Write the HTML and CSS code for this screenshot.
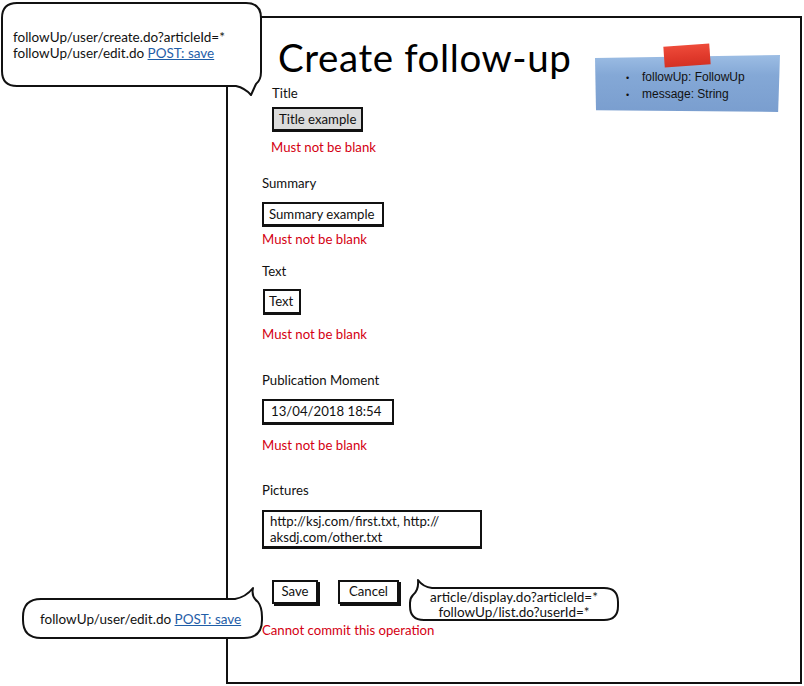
FILE: index.html
```html
<!DOCTYPE html>
<html>
<head>
<meta charset="utf-8">
<link rel="stylesheet" href="styles.css">
</head>
<body>
<div class="page">
  <div class="frame">
    <h1 class="heading">Create follow-up</h1>

    <div class="field field--indent field--title">
      <div class="label">Title</div>
      <div class="input input--gray input--w91">Title example</div>
      <div class="error error--title">Must not be blank</div>
    </div>

    <div class="field field--summary">
      <div class="label">Summary</div>
      <div class="input input--w122 input--summary">Summary example</div>
      <div class="error error--summary">Must not be blank</div>
    </div>

    <div class="field field--text">
      <div class="label">Text</div>
      <div class="input input--w37 input--text">Text</div>
      <div class="error error--text">Must not be blank</div>
    </div>

    <div class="field field--pub">
      <div class="label">Publication Moment</div>
      <div class="input input--w132 input--pub">13/04/2018 18:54</div>
      <div class="error error--pub">Must not be blank</div>
    </div>

    <div class="field field--pics">
      <div class="label">Pictures</div>
      <div class="input input--multi input--pics">http://ksj.com/first.txt, http://<br>aksdj.com/other.txt</div>
    </div>

    <div class="actions">
      <div class="btn btn--save">Save</div>
      <div class="btn btn--cancel">Cancel</div>
    </div>
    <div class="error error--commit">Cannot commit this operation</div>
  </div>

  <div class="note">
    <div class="note__paper"></div>
    <div class="note__tape"></div>
    <ul class="note__list">
      <li>followUp: FollowUp</li>
      <li>message: String</li>
    </ul>
  </div>

  <div class="bubble bubble--top">
    <svg class="bubble__shape" width="270" height="100" viewBox="0 0 270 100">
      <path d="M 17 3 H 246 Q 261 3 261 18 V 72 Q 261 80 256 84 L 251 95 Q 245 88 236 86 H 17 Q 2 86 2 71 V 18 Q 2 3 17 3 Z" fill="#fff" stroke="#111" stroke-width="2" stroke-linejoin="round"/>
    </svg>
    <div class="bubble__text bubble__text--top">followUp/user/create.do?articleId=*<br>followUp/user/edit.do <a class="link">POST: save</a></div>
  </div>

  <div class="bubble bubble--left">
    <svg class="bubble__shape" width="250" height="60" viewBox="0 0 250 60">
      <path d="M 21 16 H 215 Q 226 14 233 5 Q 231 14 238 19 Q 242 24 242 34 V 37 Q 242 55 224 55 H 21 Q 3 55 3 37 V 34 Q 3 16 21 16 Z" fill="#fff" stroke="#111" stroke-width="2" stroke-linejoin="round"/>
    </svg>
    <div class="bubble__text bubble__text--left">followUp/user/edit.do <a class="link">POST: save</a></div>
  </div>

  <div class="bubble bubble--right">
    <svg class="bubble__shape" width="220" height="50" viewBox="0 0 220 50">
      <path d="M 27 13 H 199 Q 213 13 213 27 V 31 Q 213 45 199 45 H 19 Q 5 45 5 31 V 28 Q 5 23 8 20 Q 14 15 13 5 Q 18 12 27 13 Z" fill="#fff" stroke="#111" stroke-width="2" stroke-linejoin="round"/>
    </svg>
    <div class="bubble__text bubble__text--right">article/display.do?articleId=*<br>followUp/list.do?userId=*</div>
  </div>
</div>
</body>
</html>
```
FILE: styles.css
```css
* { box-sizing: border-box; }
html, body { margin: 0; padding: 0; background: #fff; }
body {
  font-family: "Lato", "Noto Sans", sans-serif;
  font-size: 13.2px;
  color: #111;
}
.page {
  position: relative;
  width: 804px;
  height: 686px;
  overflow: hidden;
}
.frame {
  margin: 16px 0 0 226px;
  width: 576px;
  height: 668px;
  border: 2px solid #111;
  padding: 0 0 0 34px;
  display: flex;
  flex-direction: column;
  align-items: flex-start;
}
.heading {
  margin: 17px 0 0 16px;
  font-weight: 400;
  font-size: 38.5px;
  line-height: 44px;
  height: 47px;
  letter-spacing: 0.6px;
  color: #000;
}
.field {
  display: flex;
  flex-direction: column;
  align-items: flex-start;
}
.field--indent { margin-left: 10px; }
.field--title { margin-top: 3px; }
.field--summary { margin-top: 20px; }
.field--text { margin-top: 16px; }
.field--pub { margin-top: 30px; }
.field--pics { margin-top: 29px; }
.label {
  height: 16px;
  line-height: 16px;
}
.input {
  margin-top: 6px;
  height: 24px;
  line-height: 20px;
  border: 2px solid #111;
  box-shadow: 0 1px 0 #111;
  padding: 0 0 0 5px;
  white-space: nowrap;
  background: #fff;
}
.input--gray { background: #dcdcdc; }
.input--w91 { width: 91px; }
.input--w122 { width: 122px; }
.input--w37 { width: 38px; }
.input--w132 { width: 132px; }
.input--summary { margin-top: 11px; padding-left: 5px; }
.input--text { margin-top: 10px; height: 25px; margin-left: 1px; padding-left: 4px; }
.input--pub { margin-top: 11px; height: 25px; padding-left: 7px; }
.input--pics { margin-top: 12px; }
.input--multi {
  width: 220px;
  height: 38px;
  line-height: 16px;
  padding: 1px 0 0 6px;
}
.error {
  color: #d40012;
  height: 16px;
  line-height: 16px;
}
.error--title { margin-top: 8px; margin-left: -1px; }
.error--summary { margin-top: 5px; }
.error--text { margin-top: 12px; }
.error--pub { margin-top: 13px; }
.error--commit { margin-top: 18px; }
.actions {
  margin-top: 32px;
  margin-left: 10px;
  display: flex;
  gap: 20px;
}
.btn {
  height: 24px;
  line-height: 19px;
  border: 2px solid #111;
  box-shadow: 2px 2px 0 #111;
  text-align: center;
  background: #fff;
}
.btn--save { width: 46px; }
.btn--cancel { width: 61px; }

.bubble {
  position: absolute;
}
.bubble__shape {
  position: absolute;
  left: 0;
  top: 0;
  display: block;
}
.bubble__text {
  position: absolute;
  white-space: nowrap;
  line-height: 16px;
  font-size: 13.5px;
}
.link {
  color: #1f5ea8;
  text-decoration: underline;
}
.bubble--top { left: 0; top: 0; width: 270px; height: 100px; }
.bubble__text--top { left: 13px; top: 29px; }
.bubble--left { left: 20px; top: 583px; width: 250px; height: 60px; }
.bubble__text--left { left: 20px; top: 28px; }
.bubble--right { left: 405px; top: 575px; width: 220px; height: 50px; }
.bubble__text--right { left: 5px; width: 208px; top: 15px; text-align: center; line-height: 15px; }

.note {
  position: absolute;
  left: 595px;
  top: 42px;
  width: 190px;
  height: 72px;
}
.note__paper {
  position: absolute;
  left: 0;
  top: 13px;
  width: 185px;
  height: 57px;
  background: linear-gradient(180deg, #9cbde4 0%, #84a8d6 35%, #7a9ecf 100%);
  clip-path: polygon(0 3px, 100% 0, 99% 100%, 1px 97%);
}
.note__tape {
  position: absolute;
  left: 69px;
  top: 3px;
  width: 46px;
  height: 21px;
  background: linear-gradient(180deg, #ee4b3a 0%, #e0392b 60%, #d33224 100%);
  transform: rotate(-4deg);
}
.note__list {
  position: absolute;
  left: 31px;
  top: 27px;
  margin: 0;
  padding: 0;
  list-style: none;
  font-family: "Liberation Sans", Arial, sans-serif;
  font-size: 12px;
  line-height: 16px;
  color: #111;
}
.note__list li::before {
  content: "\2022";
  display: inline-block;
  width: 16px;
  font-size: 9px;
}
```
